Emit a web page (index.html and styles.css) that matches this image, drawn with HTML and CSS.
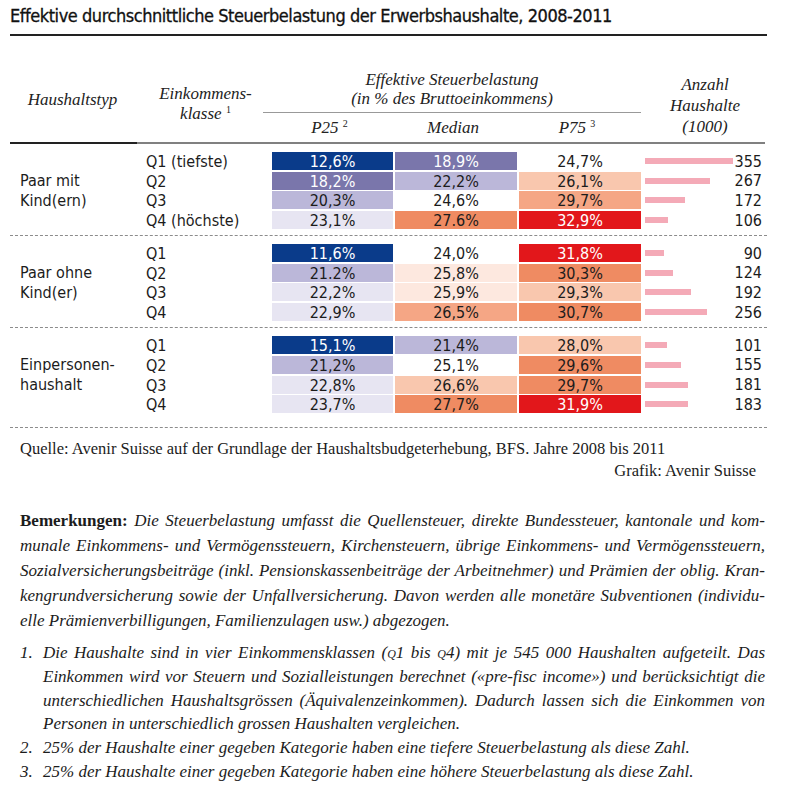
FILE: index.html
```html
<!DOCTYPE html>
<html lang="de">

<head>
    <meta charset="UTF-8">
    <meta name="viewport" content="width=device-width, initial-scale=1.0">
    <title>Effektive Steuerbelastung der Erwerbshaushalte</title>
    <link rel="stylesheet" href="styles.css">
</head>

<body>
    <div class="page">
        <h1 class="title">Effektive durchschnittliche Steuerbelastung der Erwerbshaushalte, 2008-2011</h1>

        <div class="table-head">
            <div class="th th-type">Haushaltstyp</div>
            <div class="th th-class">Einkommens-<br>klasse <sup>1</sup></div>
            <div class="th th-rate">Effektive Steuerbelastung<br>(in % des Bruttoeinkommens)</div>
            <div class="th th-count">Anzahl<br>Haushalte<br>(1000)</div>
            <div class="th th-sub">P25 <sup>2</sup></div>
            <div class="th th-sub">Median</div>
            <div class="th th-sub">P75 <sup>3</sup></div>
        </div>
        <div class="head-rule"></div>

        <div class="groups">
            <div class="group">
                <div class="group-label">Paar mit<br>Kind(ern)</div>

                <div class="q">Q1 (tiefste)</div>
                <div class="cell c-navy">12,6%</div>
                <div class="cell c-purple">18,9%</div>
                <div class="cell">24,7%</div>
                <div class="count"><span class="bar" style="width: 88px"></span><span class="num">355</span></div>

                <div class="q">Q2</div>
                <div class="cell c-purple">18,2%</div>
                <div class="cell c-lav">22,2%</div>
                <div class="cell c-light">26,1%</div>
                <div class="count"><span class="bar" style="width: 65px"></span><span class="num">267</span></div>

                <div class="q">Q3</div>
                <div class="cell c-lav">20,3%</div>
                <div class="cell">24,6%</div>
                <div class="cell c-salmon">29,7%</div>
                <div class="count"><span class="bar" style="width: 40px"></span><span class="num">172</span></div>

                <div class="q">Q4 (höchste)</div>
                <div class="cell c-pale">23,1%</div>
                <div class="cell c-orange">27.6%</div>
                <div class="cell c-red">32,9%</div>
                <div class="count"><span class="bar" style="width: 23px"></span><span class="num">106</span></div>
            </div>

            <div class="group">
                <div class="group-label">Paar ohne<br>Kind(er)</div>

                <div class="q">Q1</div>
                <div class="cell c-navy">11,6%</div>
                <div class="cell">24,0%</div>
                <div class="cell c-red">31,8%</div>
                <div class="count"><span class="bar" style="width: 19px"></span><span class="num">90</span></div>

                <div class="q">Q2</div>
                <div class="cell c-lav">21.2%</div>
                <div class="cell c-peach">25,8%</div>
                <div class="cell c-orange">30,3%</div>
                <div class="count"><span class="bar" style="width: 28px"></span><span class="num">124</span></div>

                <div class="q">Q3</div>
                <div class="cell c-pale">22,2%</div>
                <div class="cell c-peach">25,9%</div>
                <div class="cell c-light">29,3%</div>
                <div class="count"><span class="bar" style="width: 46px"></span><span class="num">192</span></div>

                <div class="q">Q4</div>
                <div class="cell c-pale">22,9%</div>
                <div class="cell c-salmon">26,5%</div>
                <div class="cell c-orange">30,7%</div>
                <div class="count"><span class="bar" style="width: 62px"></span><span class="num">256</span></div>
            </div>

            <div class="group">
                <div class="group-label">Einpersonen-<br>haushalt</div>

                <div class="q">Q1</div>
                <div class="cell c-navy">15,1%</div>
                <div class="cell c-lav">21,4%</div>
                <div class="cell c-light">28,0%</div>
                <div class="count"><span class="bar" style="width: 22px"></span><span class="num">101</span></div>

                <div class="q">Q2</div>
                <div class="cell c-lav">21,2%</div>
                <div class="cell">25,1%</div>
                <div class="cell c-orange">29,6%</div>
                <div class="count"><span class="bar" style="width: 36px"></span><span class="num">155</span></div>

                <div class="q">Q3</div>
                <div class="cell c-pale">22,8%</div>
                <div class="cell c-light">26,6%</div>
                <div class="cell c-orange">29,7%</div>
                <div class="count"><span class="bar" style="width: 43px"></span><span class="num">181</span></div>

                <div class="q">Q4</div>
                <div class="cell c-pale">23,7%</div>
                <div class="cell c-orange">27,7%</div>
                <div class="cell c-red">31,9%</div>
                <div class="count"><span class="bar" style="width: 43px"></span><span class="num">183</span></div>
            </div>
        </div>

        <p class="source">Quelle: Avenir Suisse auf der Grundlage der Haushaltsbudgeterhebung, BFS. Jahre 2008 bis 2011</p>
        <p class="credit">Grafik: Avenir Suisse</p>

        <div class="notes">
            <p class="remark">
                <span class="line"><b>Bemerkungen:</b> Die Steuerbelastung umfasst die Quellensteuer, direkte Bundessteuer, kantonale und kom-</span>
                <span class="line">munale Einkommens- und Vermögenssteuern, Kirchensteuern, übrige Einkommens- und Vermögenssteuern,</span>
                <span class="line">Sozialversicherungsbeiträge (inkl. Pensionskassenbeiträge der Arbeitnehmer) und Prämien der oblig. Kran-</span>
                <span class="line">kengrundversicherung sowie der Unfallversicherung. Davon werden alle monetäre Subventionen (individu-</span>
                <span class="line end">elle Prämienverbilligungen, Familienzulagen usw.) abgezogen.</span>
            </p>
            <ol class="footnotes">
                <li>
                    <div>
                        <span class="line">Die Haushalte sind in vier Einkommensklassen (<span class="sc">q</span>1 bis <span class="sc">q</span>4) mit je 545 000 Haushalten aufgeteilt. Das</span>
                        <span class="line">Einkommen wird vor Steuern und Sozialleistungen berechnet («pre-fisc income») und  berücksichtigt die</span>
                        <span class="line">unterschiedlichen Haushaltsgrössen (Äquivalenzeinkommen). Dadurch lassen sich die Einkommen von</span>
                        <span class="line end">Personen in unterschiedlich grossen Haushalten  vergleichen.</span>
                    </div>
                </li>
                <li><div>25% der Haushalte einer gegeben Kategorie haben eine tiefere Steuerbelastung als diese Zahl.</div></li>
                <li><div>25% der Haushalte einer gegeben Kategorie haben eine höhere Steuerbelastung als diese Zahl.</div></li>
            </ol>
        </div>
    </div>
</body>

</html>
```

FILE: styles.css
```css
body {
    margin: 0;
    background-color: #ffffff;
    color: #1c1c1c;
}

.page {
    width: 757px;
    margin-left: 10px;
}

/* title */

.title {
    margin: 0;
    padding: 4px 0 6px;
    font-family: "Liberation Sans Narrow", "DejaVu Sans Condensed", "Liberation Sans", sans-serif;
    font-size: 18px;
    line-height: 24px;
    font-weight: normal;
    letter-spacing: -0.45px;
    color: #111;
    -webkit-text-stroke: 0.3px #111;
    border-bottom: 2px solid #222;
}

/* table header */

.table-head {
    display: grid;
    grid-template-columns: 125px 133px 121px 122px 122px 1fr;
    column-gap: 2px;
    padding-top: 34px;
    font-family: "Liberation Serif", serif;
    font-style: italic;
    font-size: 17px;
    color: #222;
}

.th {
    text-align: center;
}

.th sup {
    font-size: 10px;
    font-style: normal;
    vertical-align: 6px;
    line-height: 0;
}

.th-type {
    grid-column: 1;
    grid-row: 1 / 3;
    align-self: end;
    line-height: 20px;
    padding-bottom: 32px;
}

.th-class {
    grid-column: 2;
    grid-row: 1 / 3;
    align-self: end;
    line-height: 20px;
    padding-bottom: 18px;
    padding-left: 4px;
}

.th-rate {
    grid-column: 3 / 6;
    grid-row: 1;
    margin-left: -9px;
    line-height: 19px;
    padding-bottom: 4px;
    border-bottom: 1px solid #999;
}

.th-count {
    grid-column: 6;
    grid-row: 1 / 3;
    align-self: end;
    line-height: 21px;
    padding-bottom: 5px;
}

.th-sub {
    grid-row: 2;
    line-height: 29px;
    padding-right: 6px;
}

.head-rule {
    width: 755px;
    height: 2px;
    background: linear-gradient(to right, #222 127px, #808080 127px);
}

/* table body */

.group {
    display: grid;
    grid-template-columns: 125px 133px 121px 122px 122px 1fr;
    grid-auto-rows: 18px;
    column-gap: 2px;
    row-gap: 1.7px;
    padding: 8px 0 6px;
    border-bottom: 1px dashed #8c8c8c;
    font-family: "Liberation Sans Narrow", "DejaVu Sans Condensed", "Liberation Sans", sans-serif;
    font-size: 16px;
    color: #1c1c1c;
}

.group:last-child {
    padding-bottom: 14px;
}

.group-label {
    grid-row: 1 / span 4;
    align-self: center;
    padding-left: 10px;
    line-height: 20px;
}

.q {
    padding-left: 9px;
    line-height: 19px;
}

.cell {
    text-align: center;
    line-height: 19px;
}

.c-navy {
    background-color: #0a3b8a;
    color: #ffffff;
}

.c-purple {
    background-color: #7a76ab;
    color: #ffffff;
}

.c-lav {
    background-color: #bbb7d9;
}

.c-pale {
    background-color: #e7e5f2;
}

.c-peach {
    background-color: #fde8df;
}

.c-light {
    background-color: #f9c7ae;
}

.c-salmon {
    background-color: #f5a685;
}

.c-orange {
    background-color: #ef8b62;
}

.c-red {
    background-color: #e2171b;
    color: #ffffff;
}

.count {
    display: flex;
    align-items: center;
    padding: 0 5px 0 2px;
}

.bar {
    height: 6px;
    background-color: #f4aab7;
}

.num {
    margin-left: auto;
    line-height: 19px;
}

/* source and notes */

.source {
    margin: 11px 0 0 10px;
    font-family: "Liberation Serif", serif;
    font-size: 16.5px;
    line-height: 20px;
}

.credit {
    margin: 2px 11px 0 0;
    text-align: right;
    font-family: "Liberation Serif", serif;
    font-size: 16.5px;
    line-height: 20px;
}

.notes {
    margin-top: 27px;
    padding: 0 2px 0 10px;
    font-family: "Liberation Serif", serif;
    font-size: 17px;
    font-style: italic;
    color: #1c1c1c;
}

.remark {
    margin: 0;
    line-height: 25px;
}

.remark b {
    font-style: normal;
}

.line {
    display: block;
    text-align: justify;
    text-align-last: justify;
}

.line.end {
    text-align-last: left;
}

.sc {
    font-variant: small-caps;
}

.footnotes {
    margin: 8px 0 0;
    padding: 0;
    list-style: none;
    counter-reset: note;
    line-height: 23.7px;
}

.footnotes li {
    display: grid;
    grid-template-columns: 23px 1fr;
    counter-increment: note;
}

.footnotes li::before {
    content: counter(note) ".";
}
```
